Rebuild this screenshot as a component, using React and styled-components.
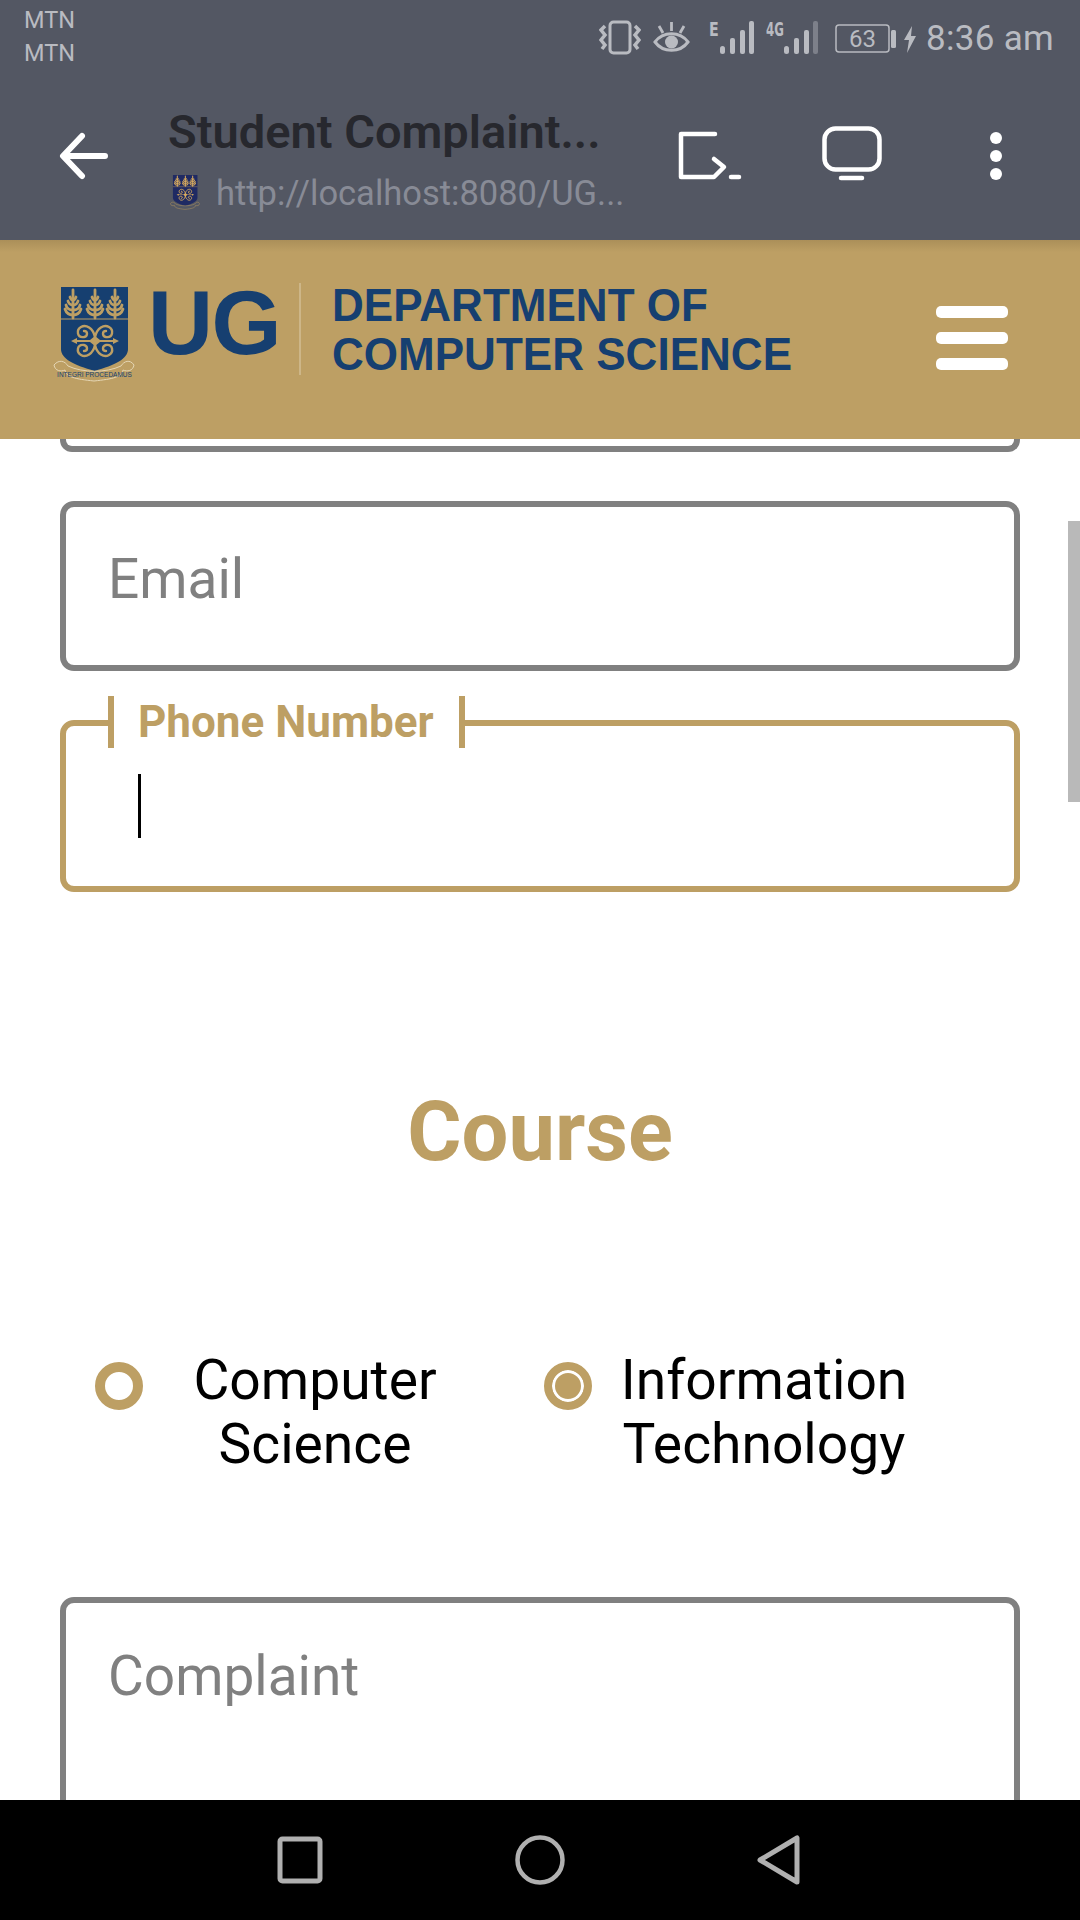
import React from "react";
import styled, { createGlobalStyle } from "styled-components";

const GOLD = "#bd9f64";
const NAVY = "#163f70";
const STATUS = "#b9bbc1";

const GlobalStyle = createGlobalStyle`
  html, body {
    margin: 0;
    padding: 0;
    background: #fff;
    font-family: Roboto, "Liberation Sans", sans-serif;
  }
`;

const Phone = styled.div`
  position: relative;
  width: 1080px;
  height: 1920px;
  display: flex;
  flex-direction: column;
  overflow: hidden;
  background: #fff;
`;

const TopChrome = styled.div`
  height: 240px;
  flex-shrink: 0;
  background: #535763;
  display: flex;
  flex-direction: column;
`;

const StatusBar = styled.div`
  height: 72px;
  display: flex;
  justify-content: space-between;
  padding: 4px 26px 0 24px;
  box-sizing: border-box;
  color: ${STATUS};
`;

const Carriers = styled.div`
  font-size: 23.500px;
  line-height: 33px;
`;

const StatusIcons = styled.div`
  display: flex;
  align-items: flex-start;
  margin-top: 15px;
`;

const StatusSvg = styled.svg`
  display: block;
  flex-shrink: 0;
  margin-left: ${(props) => props.$gap || 0}px;
`;

const Clock = styled.span`
  font-size: 35px;
  line-height: 40px;
  margin-left: 10px;
  letter-spacing: 0.3px;
`;

const NetworkTag = styled.span`
  font-family: "DejaVu Sans", sans-serif;
  font-size: 19px;
  font-weight: 700;
  line-height: 18px;
  width: ${(props) => props.$width}px;
  margin-left: ${(props) => props.$left}px;
  margin-top: 1px;
  flex-shrink: 0;
  white-space: nowrap;
  transform: scaleX(${(props) => props.$squeeze});
  transform-origin: left;
`;

const Signal = styled.div`
  flex-shrink: 0;
`;

const AppBar = styled.div`
  height: 168px;
  display: flex;
  align-items: flex-start;
`;

const ToolIcon = styled.svg`
  display: block;
  flex-shrink: 0;
  margin-top: ${(props) => props.$top}px;
  margin-left: ${(props) => props.$left}px;
`;

const TitleBlock = styled.div`
  width: 460px;
  margin-left: 59px;
  margin-top: 33px;
`;

const PageTitle = styled.div`
  color: #27282e;
  font-size: 47px;
  font-weight: 600;
  line-height: 54px;
  white-space: nowrap;
`;

const UrlRow = styled.div`
  display: flex;
  align-items: center;
  margin: 13px 0 0 2px;
`;

const UrlText = styled.span`
  color: #888b96;
  font-size: 34.500px;
  line-height: 42px;
  margin-left: 16px;
  white-space: nowrap;
`;

const Header = styled.header`
  position: relative;
  height: 199px;
  flex-shrink: 0;
  background: linear-gradient(#ab8f59, ${GOLD} 12px);
  display: flex;
  align-items: flex-start;
  padding: 43px 0 0 53px;
  box-sizing: border-box;
  z-index: 1;
`;

const CrestSlot = styled.div`
  margin-top: 4px;
  flex-shrink: 0;
`;

const Wordmark = styled.div`
  color: ${NAVY};
  font-family: "Liberation Sans", Arial, sans-serif;
  font-weight: 700;
  font-size: 90px;
  line-height: 80px;
  margin-left: 13px;
  width: 151px;
  letter-spacing: -1.500px;
`;

const Divider = styled.div`
  width: 2px;
  height: 92px;
  background: #cdb688;
  flex-shrink: 0;
`;

const DeptName = styled.div`
  color: ${NAVY};
  font-family: "Liberation Sans", Arial, sans-serif;
  font-weight: 700;
  font-size: 47px;
  line-height: 49px;
  margin-left: 31px;
  margin-top: -3px;
  width: 470px;
  white-space: nowrap;
  transform: scaleX(0.937);
  transform-origin: left top;
`;

const MenuButton = styled.div`
  display: flex;
  flex-direction: column;
  gap: 14px;
  width: 72px;
  margin-top: 23px;
  margin-left: 134px;
`;

const MenuBar = styled.span`
  display: block;
  height: 12px;
  border-radius: 5px;
  background: #fff;
`;

const Content = styled.main`
  flex: 1;
  min-height: 0;
  overflow: hidden;
  padding: 0 60px;
  box-sizing: border-box;
`;

const ClippedField = styled.div`
  height: 13px;
  box-sizing: border-box;
  border: 6px solid #808080;
  border-top: 0;
  border-radius: 0 0 12px 12px;
`;

const Field = styled.div`
  position: relative;
  height: ${(props) => props.$height}px;
  margin-top: ${(props) => props.$top}px;
  box-sizing: border-box;
  border: 6px solid ${(props) => (props.$active ? GOLD : "#808080")};
  border-radius: 14px;
  background: #fff;
  padding: ${(props) => (props.$multiline ? "40px" : "39px")} 0 0 42px;
  color: #808080;
  font-size: 55px;
  line-height: 66px;
`;

const Legend = styled.div`
  position: absolute;
  top: -30px;
  left: 42px;
  height: 52px;
  box-sizing: border-box;
  padding: 0 25px 0 24px;
  border-left: 6px solid ${GOLD};
  border-right: 6px solid ${GOLD};
  background: #fff;
  color: ${GOLD};
  font-size: 44px;
  font-weight: 700;
  line-height: 53px;
  white-space: nowrap;
`;

const Caret = styled.div`
  position: absolute;
  left: 72px;
  top: 48px;
  width: 3px;
  height: 64px;
  background: #000;
`;

const SectionTitle = styled.h2`
  margin: 190px 0 0;
  color: ${GOLD};
  font-size: 83px;
  font-weight: 700;
  line-height: 100px;
  text-align: center;
`;

const RadioGroup = styled.div`
  display: flex;
  margin-top: 166px;
  padding-left: 35px;
`;

const RadioOption = styled.label`
  display: flex;
  align-items: flex-start;
  width: ${(props) => props.$width}px;
`;

const RadioMark = styled.span`
  display: block;
  flex-shrink: 0;
  width: 48px;
  height: 48px;
  margin-top: 14px;
  box-sizing: border-box;
  border-radius: 50%;
  border: ${(props) => (props.$checked ? "8px" : "10px")} solid ${GOLD};
  background: ${(props) => (props.$checked ? GOLD : "#fff")};
  box-shadow: ${(props) => (props.$checked ? "inset 0 0 0 3px #fff" : "none")};
`;

const RadioText = styled.span`
  color: #000;
  font-size: 55.200px;
  line-height: 64px;
  text-align: center;
  width: ${(props) => props.$width}px;
  margin-left: ${(props) => props.$left}px;
`;

const Scrollbar = styled.div`
  position: absolute;
  right: 0;
  top: 521px;
  width: 12px;
  height: 281px;
  background: #b9b9b9;
`;

const NavBar = styled.nav`
  height: 120px;
  flex-shrink: 0;
  background: #000;
  position: relative;
  z-index: 1;
  display: flex;
  align-items: flex-start;
  padding: 35px 0 0 276px;
  box-sizing: border-box;
`;

const NavIcon = styled.svg`
  display: block;
  flex-shrink: 0;
  margin-left: ${(props) => props.$left || 0}px;
`;

const SPIRAL = "M42 50C40 41 33 37 28 40C23 43 24 51 31 50C35 49 35 44 31 44";

function Crest({ size, field, gold, scroll }) {
  return (
    <svg width={size} height={(size * 97) / 82} viewBox="0 0 82 97" style={{ display: "block" }}>
      <path d="M8 0H75V62C75 72 62 78 41.500 84C21 78 8 72 8 62Z" fill={field} />
      <path d="M8 32H75" stroke={gold} strokeWidth="1" />
      {[20, 42, 62].map((x) => (
        <g key={x} fill="none" stroke={gold} strokeWidth="2.800" strokeLinecap="round">
          <path d={`M${x} 3V31`} />
          <path d={`M${x - 3} 10Q${x - 2} 13 ${x} 13Q${x + 2} 13 ${x + 3} 10`} />
          <path d={`M${x - 5} 14Q${x - 4} 18 ${x} 18Q${x + 4} 18 ${x + 5} 14`} />
          <path d={`M${x - 7} 18Q${x - 6} 23 ${x} 23Q${x + 6} 23 ${x + 7} 18`} />
          <path d={`M${x - 8} 22Q${x - 6} 28 ${x} 28Q${x + 6} 28 ${x + 8} 22`} />
        </g>
      ))}
      <g fill="none" stroke={gold} strokeWidth="2.400" strokeLinecap="round">
        <path d={SPIRAL} />
        <path d={SPIRAL} transform="translate(84 0) scale(-1 1)" />
        <path d={SPIRAL} transform="translate(0 108) scale(1 -1)" />
        <path d={SPIRAL} transform="translate(84 108) scale(-1 -1)" />
      </g>
      <path d="M18 54L24 51V53H37L42 49L47 53H60V51L66 54L60 57V55H47L42 59L37 55H24V57Z" fill={gold} />
      <path d="M1 78C6 72 12 74 15 79C30 86 53 86 68 79C71 74 77 72 81 78C80 84 74 85 70 83C69 90 60 92 41 94C22 92 13 90 12 83C8 85 2 84 1 78Z" fill="none" stroke={scroll} strokeWidth="1" />
      {size > 50 && (
        <text x="41.500" y="90" fontSize="6.500" fontFamily="Liberation Sans, sans-serif" textAnchor="middle" fill={field}>
          INTEGRI PROCEDAMUS
        </text>
      )}
    </svg>
  );
}

function SignalBars({ lastDim }) {
  return (
    <svg width="35" height="36" viewBox="0 0 35 36" style={{ display: "block" }}>
      <g fill={STATUS}>
        <rect x="0" y="27" width="5" height="8" rx="2.500" />
        <rect x="10" y="19" width="5" height="16" rx="2" />
        <rect x="20" y="11" width="5" height="24" rx="2" />
        <rect x="29" y="2" width="5" height="33" rx="2" fill={lastDim ? "#7d808a" : STATUS} />
      </g>
    </svg>
  );
}

export default function App() {
  return (
    <Phone>
      <GlobalStyle />
      <TopChrome>
        <StatusBar>
          <Carriers>
            MTN
            <br />
            MTN
          </Carriers>
          <StatusIcons>
            <StatusSvg width="42" height="36" viewBox="0 0 42 36" fill="none" stroke={STATUS}>
              <rect x="11" y="3" width="20" height="31" rx="3.500" strokeWidth="3" />
              <path d="M6 7L2 11L6 16L2 21L6 26L3 30M36 7L40 11L36 16L40 21L36 26L39 30" strokeWidth="3.500" />
            </StatusSvg>
            <StatusSvg $gap={12} width="37" height="36" viewBox="0 0 37 36" fill="none" stroke={STATUS}>
              <path d="M2 23C10 12 27 12 35 23C27 34 10 34 2 23Z" strokeWidth="3" />
              <circle cx="18.500" cy="23" r="6.500" fill={STATUS} stroke="none" />
              <path d="M18.500 3V12M6 7L10 14M31 7L27 14" strokeWidth="2.800" />
            </StatusSvg>
            <NetworkTag $width={11} $left={19} $squeeze={0.75}>E</NetworkTag>
            <Signal>
              <SignalBars />
            </Signal>
            <NetworkTag $width={18} $left={11} $squeeze={0.62}>4G</NetworkTag>
            <Signal>
              <SignalBars lastDim />
            </Signal>
            <StatusSvg $gap={16} width="62" height="36" viewBox="0 0 62 36" fill="none">
              <rect x="1" y="6" width="53" height="27" rx="3" stroke={STATUS} strokeWidth="1.500" />
              <text x="27.500" y="28" fontSize="24" fontFamily="Roboto, sans-serif" textAnchor="middle" fill={STATUS}>63</text>
              <rect x="56" y="11" width="5" height="18" rx="1.500" fill={STATUS} />
            </StatusSvg>
            <StatusSvg $gap={7} width="12" height="36" viewBox="0 0 12 36">
              <path d="M8 7L0 21H5L3 34L12 17H7Z" fill={STATUS} />
            </StatusSvg>
            <Clock>8:36 am</Clock>
          </StatusIcons>
        </StatusBar>
        <AppBar>
          <ToolIcon $top={59} $left={59} width="50" height="50" viewBox="0 0 50 50" fill="none" stroke="#fff" strokeWidth="6" strokeLinecap="round" strokeLinejoin="round">
            <path d="M5 25H46M23 5L4 25L23 45" />
          </ToolIcon>
          <TitleBlock>
            <PageTitle>Student Complaint...</PageTitle>
            <UrlRow>
              <Crest size={30} field="#1f2a63" gold="#d8ab5e" scroll="#d8ab5e" />
              <UrlText>http://localhost:8080/UG...</UrlText>
            </UrlRow>
          </TitleBlock>
          <ToolIcon $top={59} $left={50} width="64" height="50" viewBox="0 0 64 50" fill="none" stroke="#fff" strokeLinecap="round" strokeLinejoin="round">
            <path d="M37 3H3V46H36L46 36L36 28" strokeWidth="4.500" />
            <path d="M53 46H61" strokeWidth="4.500" />
          </ToolIcon>
          <ToolIcon $top={54} $left={80} width="60" height="56" viewBox="0 0 60 56" fill="none" stroke="#fff" strokeLinecap="round" strokeWidth="4.500">
            <rect x="2.500" y="2.500" width="55" height="41" rx="11" />
            <path d="M19 52H40" />
          </ToolIcon>
          <ToolIcon $top={60} $left={107} width="14" height="48" viewBox="0 0 14 48" fill="#fff">
            <circle cx="7" cy="6" r="6" />
            <circle cx="7" cy="24" r="6" />
            <circle cx="7" cy="42" r="6" />
          </ToolIcon>
        </AppBar>
      </TopChrome>

      <Header>
        <CrestSlot>
          <Crest size={82} field={NAVY} gold={GOLD} scroll="#e5d6b4" />
        </CrestSlot>
        <Wordmark>UG</Wordmark>
        <Divider />
        <DeptName>
          DEPARTMENT OF
          <br />
          COMPUTER SCIENCE
        </DeptName>
        <MenuButton>
          <MenuBar />
          <MenuBar />
          <MenuBar />
        </MenuButton>
      </Header>

      <Content>
        <ClippedField />
        <Field $top={49} $height={170}>Email</Field>
        <Field $top={49} $height={172} $active>
          <Legend>Phone Number</Legend>
          <Caret />
        </Field>
        <SectionTitle>Course</SectionTitle>
        <RadioGroup>
          <RadioOption $width={449}>
            <RadioMark />
            <RadioText $width={264} $left={40}>Computer Science</RadioText>
          </RadioOption>
          <RadioOption $width={460}>
            <RadioMark $checked />
            <RadioText $width={320} $left={12}>Information Technology</RadioText>
          </RadioOption>
        </RadioGroup>
        <Field $top={121} $height={400} $multiline>Complaint</Field>
      </Content>

      <Scrollbar />

      <NavBar>
        <NavIcon width="48" height="50" viewBox="0 0 48 50" fill="none" stroke="#b0b0b0" strokeWidth="5">
          <rect x="4" y="4" width="40" height="42" rx="2.500" />
        </NavIcon>
        <NavIcon $left={191} width="50" height="50" viewBox="0 0 50 50" fill="none" stroke="#b0b0b0" strokeWidth="4.500">
          <circle cx="25" cy="25" r="22.500" />
        </NavIcon>
        <NavIcon $left={192} width="44" height="50" viewBox="0 0 44 50" fill="none" stroke="#b0b0b0" strokeWidth="5" strokeLinejoin="round">
          <path d="M40 3V47L3 25Z" />
        </NavIcon>
      </NavBar>
    </Phone>
  );
}
